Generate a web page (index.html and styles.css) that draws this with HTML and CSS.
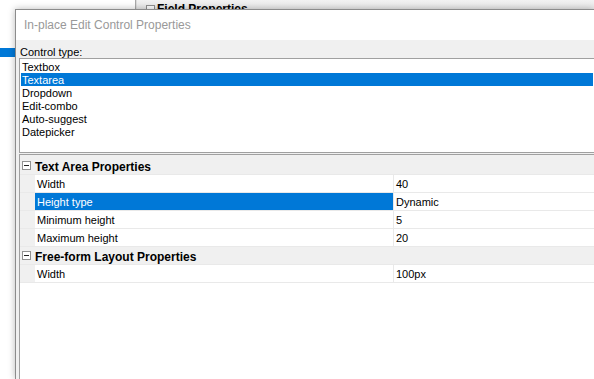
FILE: index.html
```html
<!DOCTYPE html>
<html lang="en">
<head>
    <meta charset="UTF-8">
    <meta name="viewport" content="width=device-width, initial-scale=1.0">
    <title>In-place Edit Control Properties</title>
    <link rel="stylesheet" href="styles.css">
</head>
<body>
    <div class="app">
        <aside class="side">
            <div class="side-item selected"></div>
        </aside>
        <main class="panel">
            <div class="panel-head">
                <span class="toggle"></span>
                <span class="panel-title">Field Properties</span>
            </div>
        </main>
    </div>

    <div class="dialog">
        <div class="titlebar">In-place Edit Control Properties</div>
        <div class="dialog-body">
            <label class="field-label">Control type:</label>
            <ul class="listbox">
                <li>Textbox</li>
                <li class="selected">Textarea</li>
                <li>Dropdown</li>
                <li>Edit-combo</li>
                <li>Auto-suggest</li>
                <li>Datepicker</li>
            </ul>
            <div class="propgrid">
                <div class="cat">
                    <span class="gutter"><span class="toggle"></span></span>
                    <span class="cat-name">Text Area Properties</span>
                </div>
                <div class="prop">
                    <span class="gutter"></span>
                    <span class="name">Width</span>
                    <span class="value">40</span>
                </div>
                <div class="prop selected">
                    <span class="gutter"></span>
                    <span class="name">Height type</span>
                    <span class="value">Dynamic</span>
                </div>
                <div class="prop">
                    <span class="gutter"></span>
                    <span class="name">Minimum height</span>
                    <span class="value">5</span>
                </div>
                <div class="prop">
                    <span class="gutter"></span>
                    <span class="name">Maximum height</span>
                    <span class="value">20</span>
                </div>
                <div class="cat">
                    <span class="gutter"><span class="toggle"></span></span>
                    <span class="cat-name">Free-form Layout Properties</span>
                </div>
                <div class="prop">
                    <span class="gutter"></span>
                    <span class="name">Width</span>
                    <span class="value">100px</span>
                </div>
            </div>
        </div>
    </div>
</body>
</html>
```

FILE: styles.css
```css
body {
    margin: 0;
    width: 594px;
    height: 379px;
    overflow: hidden;
    position: relative;
    background: #fff;
    font-family: 'Liberation Sans', Arial, sans-serif;
    font-size: 11px;
    color: #000;
}

/* background window */
.app {
    display: flex;
    height: 379px;
}

.side {
    width: 135px;
    padding-top: 48px;
    border-right: 1px solid #a9a9a9;
    background: #fff;
}

.side-item.selected {
    height: 9px;
    background-color: #0078d7;
}

.panel {
    flex: 1;
    border-left: 1px solid #dcdcdc;
    background: #f0f0f0;
}

.panel-head {
    display: flex;
    align-items: center;
    gap: 2px;
    height: 18px;
    padding-left: 9px;
    background: linear-gradient(#f2f2f2, #e1e1e1);
}

.panel-title {
    font-size: 12px;
    font-weight: bold;
}

.toggle {
    position: relative;
    width: 9px;
    height: 9px;
    box-sizing: border-box;
    border: 1px solid #919191;
    background: #fff;
    flex: none;
}

.toggle::after {
    content: '';
    position: absolute;
    left: 1px;
    top: 3px;
    width: 5px;
    height: 1px;
    background: #222;
}

/* dialog */
.dialog {
    position: absolute;
    left: 15px;
    top: 9px;
    right: 0;
    bottom: 0;
    display: flex;
    flex-direction: column;
    border-left: 1px solid #8c8c8c;
    border-top: 1px solid #8c8c8c;
    background: #f0f0f0;
    box-shadow: 0 0 7px rgba(0, 0, 0, 0.28);
}

.titlebar {
    height: 30px;
    line-height: 30px;
    padding-left: 8px;
    background: #fff;
    color: #999;
    font-size: 12px;
    flex: none;
}

.dialog-body {
    flex: 1;
    display: flex;
    flex-direction: column;
    padding: 5px 0 0 3px;
    min-height: 0;
}

.field-label {
    display: block;
    height: 12px;
    padding: 1px 0 0 1px;
    line-height: 13px;
}

.listbox {
    list-style: none;
    margin: 0 0 1px;
    padding: 1px;
    height: 91px;
    border: 1px solid #a0a0a0;
    border-right: none;
    background: #fff;
    flex: none;
}

.listbox li {
    height: 12px;
    padding: 1px 0 0 1px;
    line-height: 13px;
}

.listbox li.selected {
    background-color: #0078d7;
    color: #fff;
}

/* property grid */
.propgrid {
    flex: 1;
    border-left: 1px solid #a0a0a0;
    border-top: 1px solid #a0a0a0;
    background: #fff;
}

.cat,
.prop {
    display: flex;
    height: 17px;
    line-height: 17px;
    border-bottom: 1px solid #e9e9e9;
}

.cat {
    background: #f0f0f0;
    font-size: 12px;
    font-weight: bold;
}

.cat:first-child {
    padding-top: 2px;
}

.cat-name {
    height: 16px;
    padding-top: 1px;
    line-height: 18px;
}

.prop .name,
.prop .value {
    height: 16px;
    padding-top: 1px;
}

.gutter {
    display: flex;
    align-items: center;
    width: 15px;
    padding-left: 2px;
    box-sizing: border-box;
    background: #f0f0f0;
    flex: none;
}

.name {
    width: 358px;
    padding-left: 2px;
    box-sizing: content-box;
    flex: none;
}

.prop .name {
    width: 356px;
}

.value {
    flex: 1;
    padding-left: 2px;
    border-left: 1px solid #e9e9e9;
}

.prop.selected .name {
    background-color: #0078d7;
    color: #fff;
}
```
